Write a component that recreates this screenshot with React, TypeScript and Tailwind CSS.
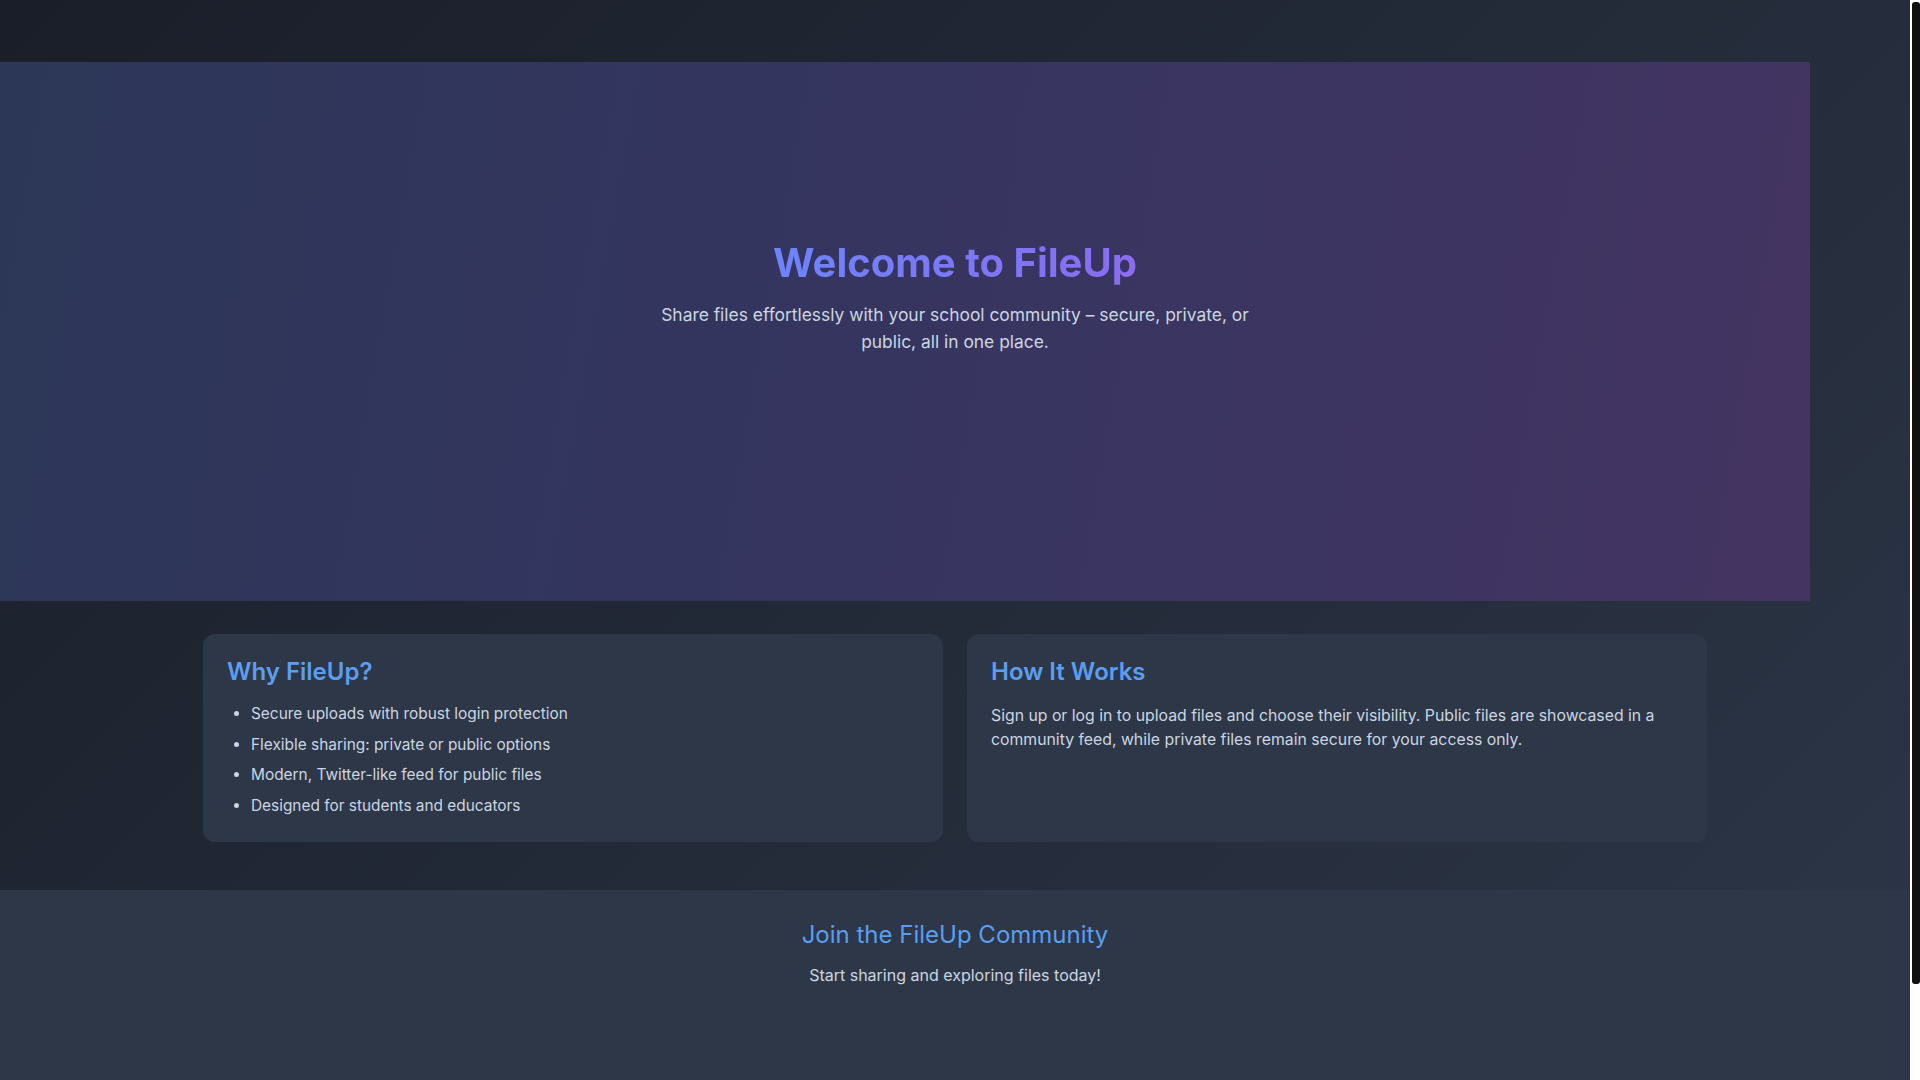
import React from 'react';

const reasons = [
  'Secure uploads with robust login protection',
  'Flexible sharing: private or public options',
  'Modern, Twitter-like feed for public files',
  'Designed for students and educators',
];

export default function App() {
  return (
    <div className="flex h-screen bg-white font-['Inter','Noto_Sans',sans-serif]">
      <div className="min-w-0 flex-1 overflow-y-auto [scrollbar-width:none]">
        <div className="min-h-full bg-[linear-gradient(135deg,#1a1e29_0%,#232a38_50%,#2d3748_100%)]">
          <header className="h-[62px]" />

          <section className="flex flex-col items-center bg-[linear-gradient(100deg,#2c3757_0%,#353560_45%,#443462_100%)] bg-[length:1810px_100%] bg-no-repeat pt-[177px] pb-[246px] text-center">
            <h1 className="mb-[15px] bg-[linear-gradient(90deg,#6d84fa,#8a6cf2)] bg-clip-text text-[40px] leading-[1.2] font-bold text-transparent">
              Welcome to FileUp
            </h1>
            <p className="max-w-[600px] text-[17.4px] leading-[26.5px] text-[#cbd5e0]">
              Share files effortlessly with your school community – secure, private, or public, all in one place.
            </p>
          </section>

          <section className="pt-[33px] pb-12">
            <div className="mx-auto grid max-w-[1504px] grid-cols-2 gap-6">
              <div className="rounded-xl bg-[#2d3748] px-6 pt-[22px] pb-6">
                <h2 className="mb-[13px] text-2xl leading-8 font-semibold text-[#5b9ef0]">Why FileUp?</h2>
                <ul className="list-disc pl-6 text-[15.4px] leading-[25.6px] text-[#cbd5e0]">
                  {reasons.map((r) => (
                    <li key={r} className="mb-[5px] last:mb-0">
                      {r}
                    </li>
                  ))}
                </ul>
              </div>

              <div className="rounded-xl bg-[#2d3748] px-6 pt-[22px] pb-6">
                <h2 className="mb-[16px] text-2xl leading-8 font-semibold text-[#5b9ef0]">How It Works</h2>
                <p className="text-[15.8px] leading-[23.5px] text-[#cbd5e0]">
                  Sign up or log in to upload files and choose their visibility. Public files are showcased in a community feed, while private files remain secure for your access only.
                </p>
              </div>
            </div>
          </section>

          <footer className="bg-[#2d3748] pt-[31px] pb-[197px] text-center">
            <h2 className="mb-[13px] text-2xl leading-[1.2] font-normal text-[#5b9ef0]">Join the FileUp Community</h2>
            <p className="text-base leading-6 text-[#cbd5e0]">Start sharing and exploring files today!</p>
          </footer>
        </div>
      </div>

      {/* scrollbar track */}
      <div className="w-[10px] shrink-0 bg-white pt-[2px] pl-[2px]">
        <div className="h-[982px] rounded-[3px] bg-[#111111]" />
      </div>
    </div>
  );
}
